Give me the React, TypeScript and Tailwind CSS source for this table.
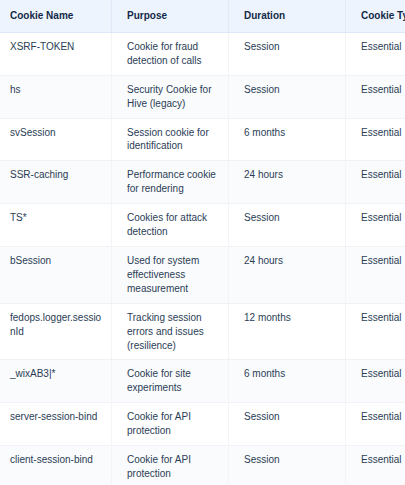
import React from "react";

const rows: [string, string, string, string][] = [
  ["XSRF-TOKEN", "Cookie for fraud detection of calls", "Session", "Essential"],
  ["hs", "Security Cookie for Hive (legacy)", "Session", "Essential"],
  ["svSession", "Session cookie for identification", "6 months", "Essential"],
  ["SSR-caching", "Performance cookie for rendering", "24 hours", "Essential"],
  ["TS*", "Cookies for attack detection", "Session", "Essential"],
  ["bSession", "Used for system effectiveness measurement", "24 hours", "Essential"],
  ["fedops.logger.sessionId", "Tracking session errors and issues (resilience)", "12 months", "Essential"],
  ["_wixAB3|*", "Cookie for site experiments", "6 months", "Essential"],
  ["server-session-bind", "Cookie for API protection", "Session", "Essential"],
  ["client-session-bind", "Cookie for API protection", "Session", "Essential"],
];

export default function App() {
  return (
    <div
      className="w-[405px] h-[485px] overflow-hidden bg-white"
      style={{ fontFamily: '"Liberation Sans", Arial, sans-serif' }}
    >
      <div className="w-[463px] text-[10px] leading-[13.9px]">
        <div className="flex bg-[#edf4fd] border-b border-[#dce8f7] text-[#142a48] font-bold">
          <div className="w-[112px] shrink-0 pl-[10px] pr-[8px] py-[9px] border-r border-[#e0eaf8]">Cookie Name</div>
          <div className="w-[117px] shrink-0 pl-[15px] pr-[12px] py-[9px] border-r border-[#e0eaf8]">Purpose</div>
          <div className="w-[117px] shrink-0 pl-[15px] pr-[12px] py-[9px] border-r border-[#e0eaf8]">Duration</div>
          <div className="w-[117px] shrink-0 pl-[15px] pr-[12px] py-[9px] whitespace-nowrap">Cookie Type</div>
        </div>
        {rows.map((r, i) => (
          <div
            key={i}
            className={`flex border-b border-[#f0f2f5] text-[#2a3d56] ${i % 2 === 1 ? "bg-[#fafbfc]" : "bg-white"}`}
          >
            <div className="w-[112px] shrink-0 pl-[10px] pr-[8px] py-[7px] border-r border-[#f3f4f7] break-all">{r[0]}</div>
            <div className="w-[117px] shrink-0 pl-[15px] pr-[12px] py-[7px] border-r border-[#f3f4f7]">{r[1]}</div>
            <div className="w-[117px] shrink-0 pl-[15px] pr-[12px] py-[7px] border-r border-[#f3f4f7]">{r[2]}</div>
            <div className="w-[117px] shrink-0 pl-[15px] pr-[12px] py-[7px]">{r[3]}</div>
          </div>
        ))}
      </div>
    </div>
  );
}
